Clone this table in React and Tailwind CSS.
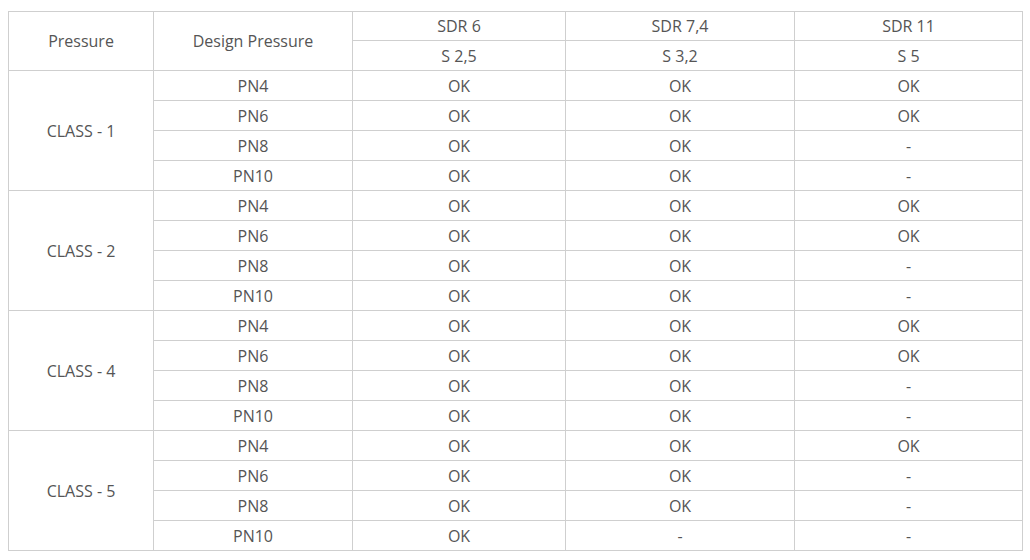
import React from 'react';

const groups = [
  { name: 'CLASS - 1', rows: [['PN4', 'OK', 'OK', 'OK'], ['PN6', 'OK', 'OK', 'OK'], ['PN8', 'OK', 'OK', '-'], ['PN10', 'OK', 'OK', '-']] },
  { name: 'CLASS - 2', rows: [['PN4', 'OK', 'OK', 'OK'], ['PN6', 'OK', 'OK', 'OK'], ['PN8', 'OK', 'OK', '-'], ['PN10', 'OK', 'OK', '-']] },
  { name: 'CLASS - 4', rows: [['PN4', 'OK', 'OK', 'OK'], ['PN6', 'OK', 'OK', 'OK'], ['PN8', 'OK', 'OK', '-'], ['PN10', 'OK', 'OK', '-']] },
  { name: 'CLASS - 5', rows: [['PN4', 'OK', 'OK', 'OK'], ['PN6', 'OK', 'OK', '-'], ['PN8', 'OK', 'OK', '-'], ['PN10', 'OK', '-', '-']] },
];

const base = 'border border-[#cfcfcf] text-center align-middle p-0';
const cell = `${base} h-[30px]`;
const top = `${base} h-[29px] font-normal`;

export default function App() {
  return (
    <div className="bg-white w-[1030px] h-[560px] pt-[11px] pl-[8px] font-['Open_Sans',sans-serif] text-[16px] text-[#555]">
      <table className="border-collapse table-fixed w-[1014px]">
        <colgroup>
          <col className="w-[145px]" />
          <col className="w-[199px]" />
          <col className="w-[213px]" />
          <col className="w-[229px]" />
          <col className="w-[228px]" />
        </colgroup>
        <thead>
          <tr>
            <th rowSpan={2} className={top}>Pressure</th>
            <th rowSpan={2} className={top}>Design Pressure</th>
            <th className={top}>SDR 6</th>
            <th className={top}>SDR 7,4</th>
            <th className={top}>SDR 11</th>
          </tr>
          <tr>
            <th className={`${cell} font-normal`}>S 2,5</th>
            <th className={`${cell} font-normal`}>S 3,2</th>
            <th className={`${cell} font-normal`}>S 5</th>
          </tr>
        </thead>
        <tbody>
          {groups.map((g) =>
            g.rows.map((r, i) => (
              <tr key={g.name + i}>
                {i === 0 && (
                  <td rowSpan={4} className={cell}>{g.name}</td>
                )}
                {r.map((v, j) => (
                  <td key={j} className={cell}>{v}</td>
                ))}
              </tr>
            ))
          )}
        </tbody>
      </table>
    </div>
  );
}
